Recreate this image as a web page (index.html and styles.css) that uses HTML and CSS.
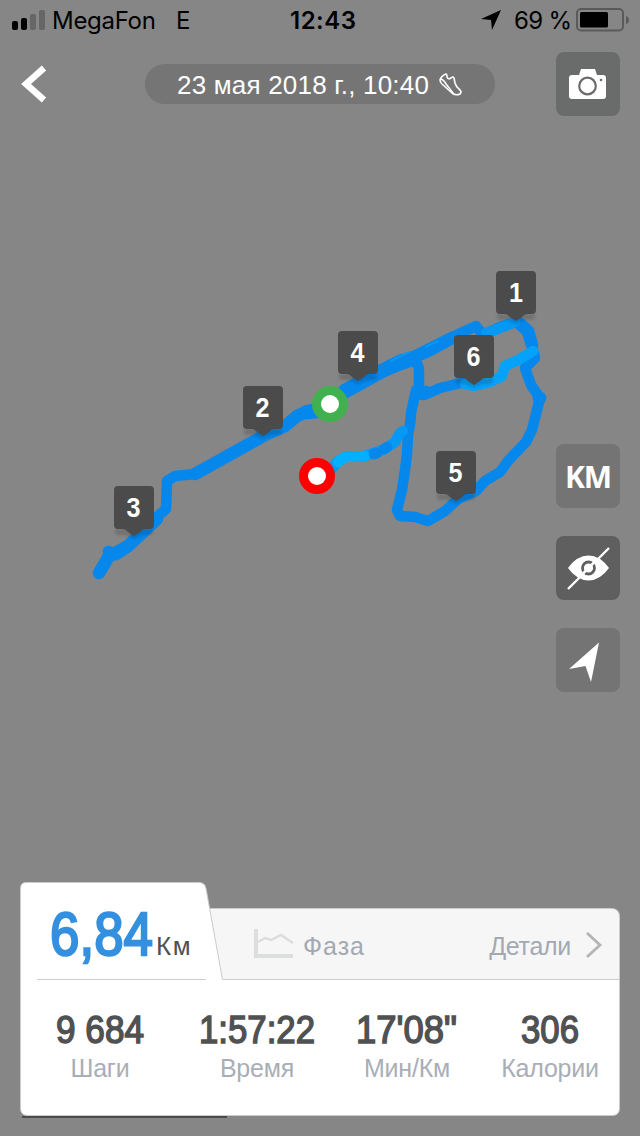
FILE: index.html
```html
<!DOCTYPE html>
<html lang="ru">
<head>
  <meta charset="UTF-8" />
  <meta name="viewport" content="width=device-width, initial-scale=1.0"/>
  <title>Тренировка</title>
  <link rel="stylesheet" href="styles.css">
</head>
<body>

  <!-- Карта маршрута -->
  <svg class="map" viewBox="0 0 640 1136">
    <defs>
      <g id="pin">
        <path class="pin-shadow" d="M1 43h38v3q0 3-4 3h-6l-9 4-9-4H5q-4 0-4-3z"/>
        <path class="pin-body" d="M4 0h32a4 4 0 0 1 4 4v35a4 4 0 0 1-4 4h-4c-3 0-4 1-6 3l-6 4-6-4c-2-2-3-3-6-3H4a4 4 0 0 1-4-4V4a4 4 0 0 1 4-4z"/>
      </g>
    </defs>
    <g class="route">
      <path d="M99 573l10-17M115 553l13-7 15-14 14-13"/>
      <path class="thin" d="M108 551l7 2M153 520l13-11 1-28 8-5 20-2"/>
      <path d="M109 555l7-1 12-8 15-14M195 474l45-25 25-14 20-9 12-10 9-4 12-2"/>
      <path class="wide" d="M307 412l10-1M345 391l13-7 22-12 22-11"/>
      <path d="M330 404l15-13 35-19 32-12"/>
      <path class="thin" d="M380 371l32-14 18-9 22-11 24-11 7 9 17-8 16-5 10 6 6 17 1 8"/>
      <path d="M412 358l18-8 22-12"/>
      <path d="M520 324l8 7 4 14M423 393l3-1M539 399l1-1"/>
      <path class="thin" d="M412 359q7 4 7 12v23l5 1 16-7 25-6"/>
      <path class="thin" d="M533 350l2 8-10 10 6 17 9 13-8 32-6 12-18 19-8 11-15 9-9 10-18 8-13 12-17 10-13-4-15-1-3-6 5-20 3-20 2-16 1-19 2-10 1-12 5-23"/>
      <path class="thin light" d="M486 333l14-5 15-6"/>
      <path class="thin lighter" d="M465 384l9 2 16-4 12-6 3-10 15-7 13-8"/>
      <path class="thin light" d="M331 470l6-8 8-5 20-1 20-7 10-7 5-9 3-2"/>
      <path class="thin cyan" d="M338 462l7-5 20-1"/>
      <path class="thin" d="M374 454l3-1M384 449l3-2"/>
      <path class="streak" d="M391 361l18-9M426 347l12-6"/>
    </g>

    <circle cx="330" cy="404" r="18" fill="#41b04f"/>
    <circle cx="330" cy="404" r="9" fill="#fff"/>
    <circle cx="317" cy="476" r="18" fill="#fe0000"/>
    <circle cx="317" cy="476" r="9" fill="#fff"/>

    <g class="pins">
      <g transform="translate(496 271)"><use href="#pin"/><text x="13" y="31" textLength="14" lengthAdjust="spacingAndGlyphs">1</text></g>
      <g transform="translate(243 386)"><use href="#pin"/><text x="12.500" y="31" textLength="14" lengthAdjust="spacingAndGlyphs">2</text></g>
      <g transform="translate(114 486)"><use href="#pin"/><text x="12.500" y="31" textLength="14" lengthAdjust="spacingAndGlyphs">3</text></g>
      <g transform="translate(338 331)"><use href="#pin"/><text x="12.500" y="31" textLength="14" lengthAdjust="spacingAndGlyphs">4</text></g>
      <g transform="translate(436 451)"><use href="#pin"/><text x="12.500" y="31" textLength="14" lengthAdjust="spacingAndGlyphs">5</text></g>
      <g transform="translate(454 335)"><use href="#pin"/><text x="12.500" y="31" textLength="14" lengthAdjust="spacingAndGlyphs">6</text></g>
    </g>
  </svg>

  <div class="status-bar">
    <svg class="signal" width="34" height="20" viewBox="0 0 34 20">
      <rect x="0" y="11" width="6" height="9" rx="2"/>
      <rect x="9" y="8" width="6" height="12" rx="2"/>
      <rect x="18" y="4" width="6" height="16" rx="2" fill="#666"/>
      <rect x="27" y="0" width="6" height="20" rx="2" fill="#666"/>
    </svg>
    <span class="carrier">MegaFon</span>
    <span class="network">E</span>
    <span class="clock">12:43</span>
    <svg class="location" width="20" height="20" viewBox="0 0 20 20"><path d="M20 0L11 20 10 10 0 9z"/></svg>
    <span class="percent">69 %</span>
    <svg class="battery" width="54" height="24" viewBox="0 0 54 24">
      <rect x="1" y="1" width="46" height="21.500" rx="4" fill="none" stroke="#5a5a5a" stroke-width="2"/>
      <rect x="4" y="4" width="28" height="15.500" rx="1.500"/>
      <path d="M50 8q3 1 3 4t-3 4z" fill="#5a5a5a"/>
    </svg>
  </div>

  <div class="header">
    <svg class="back" width="28" height="38" viewBox="0 0 28 38"><path d="M24 3L6 19l18 16" fill="none" stroke="#fff" stroke-width="6.500"/></svg>
    <div class="date">
      <span>23 мая 2018 г., 10:40</span>
      <svg width="24" height="24" viewBox="0 0 24 24" fill="none" stroke="#fff" stroke-width="1.600" stroke-linejoin="round" stroke-linecap="round">
        <path d="M8 2Q3 4 2 8q0 2 2 4l10 9q4 3 8 1 2-2 0-4-4-3-5-7l-1-5q-1-2-3 0-3 2-4-1 0-3-1-3z"/>
        <path d="M3 7q3 1 5 5l7 9"/>
      </svg>
    </div>
    <div class="tool camera">
      <svg width="38" height="31" viewBox="0 0 38 31">
        <path d="M10 6l2-6h14l2 6h6q3 0 3 3v18q0 3-3 3H3q-3 0-3-3V9q0-3 3-3z" fill="#fff"/>
        <circle cx="18.500" cy="17" r="8.300" fill="none" stroke="#6a6c6b" stroke-width="2.200"/>
        <circle cx="32" cy="11" r="1.300" fill="#6a6c6b"/>
      </svg>
    </div>
  </div>

  <div class="tools">
    <div class="tool">KM</div>
    <div class="tool active">
      <svg width="44" height="44" viewBox="0 0 44 44">
        <path d="M2 22Q11 9.500 22.500 9.500T43 22Q34 34.500 22.500 34.500T2 22z" fill="#fff"/>
        <circle cx="22.500" cy="22" r="6" fill="none" stroke="#5f5f5f" stroke-width="2.800"/>
        <path d="M17 27.500L28 16.500" stroke="#fff" stroke-width="2.500"/>
        <path d="M2 43L15 30M31 14L43 2" stroke="#fff" stroke-width="2.400"/>
      </svg>
    </div>
    <div class="tool">
      <svg width="44" height="44" viewBox="0 0 44 44"><path d="M33 4.500L25 44l-5.500-16L3 31z" fill="#fff"/></svg>
    </div>
  </div>

  <!-- Итоги тренировки -->
  <div class="panel">
    <svg class="panel-shape" width="600" height="234" viewBox="0 0 600 234">
      <path d="M188 26.500h403q8.500 0 8.500 8v63H188z" fill="#f6f6f6" stroke="#c9cbcc"/>
      <path d="M6 .5h173q6 0 7 6l16.500 91H599.500V226q0 7.500-7.500 7.500H8Q.5 233.500.5 226V6.500Q.5.5 6 .5z" fill="#fff" stroke="#c9cbcc"/>
    </svg>
    <div class="tabs">
      <div class="distance">
        <svg width="103" height="60"><text class="big" x="0" y="49" textLength="103" lengthAdjust="spacingAndGlyphs">6,84</text></svg>
        <span>Км</span>
      </div>
      <div class="phase">
        <svg width="42" height="29" viewBox="0 0 42 29" fill="none" stroke="#dcdddd">
          <path d="M2 0v27h37" stroke-width="4"/>
          <path d="M4 13l7-4 6 2 10-5 12 8" stroke-width="2.500"/>
        </svg>
        <span>Фаза</span>
      </div>
      <div class="details">
        <span>Детали</span>
        <svg width="18" height="28" viewBox="0 0 18 28"><path d="M2 2l13 12L2 26" fill="none" stroke="#b3b4b5" stroke-width="2.800"/></svg>
      </div>
    </div>
    <div class="stats">
      <div class="stat">
        <svg width="88" height="40"><text x="0" y="34" textLength="88" lengthAdjust="spacingAndGlyphs">9 684</text></svg>
        <span>Шаги</span>
      </div>
      <div class="stat">
        <svg width="116" height="40"><text x="0" y="34" textLength="116" lengthAdjust="spacingAndGlyphs">1:57:22</text></svg>
        <span>Время</span>
      </div>
      <div class="stat">
        <svg width="102" height="40"><text x="0" y="34" textLength="101" lengthAdjust="spacingAndGlyphs">17'08"</text></svg>
        <span>Мин/Км</span>
      </div>
      <div class="stat">
        <svg width="58" height="40"><text x="0" y="34" textLength="58" lengthAdjust="spacingAndGlyphs">306</text></svg>
        <span>Калории</span>
      </div>
    </div>
  </div>
  <div class="attribution"></div>

</body>
</html>
```
FILE: styles.css
```css
body {
  position: relative;
  width: 640px;
  height: 1136px;
  margin: 0;
  background-color: #868686;
  color: #fff;
  font-family: "Liberation Sans", Arial, sans-serif;
  display: flex;
  flex-direction: column;
  overflow: hidden;
}
svg {
  display: block;
  flex: none;
  overflow: visible;
}
span {
  white-space: nowrap;
}
.map {
  position: absolute;
  top: 0;
  left: 0;
  width: 640px;
  height: 1136px;
}
.route path {
  fill: none;
  stroke: #0587ec;
  stroke-width: 12.500;
  stroke-linecap: round;
  stroke-linejoin: round;
}
.route .wide {
  stroke-width: 14.500;
}
.route .thin {
  stroke-width: 10.500;
}
.route .light {
  stroke: #0598f4;
}
.route .lighter {
  stroke: #04a2f8;
}
.route .cyan {
  stroke: #02b0ff;
}
.route .streak {
  stroke: #0598f4;
  stroke-width: 2;
}
.pin-body {
  fill: #4b4b4b;
}
.pin-shadow {
  fill: #000;
  opacity: 0.15;
  filter: blur(1.500px);
}
.pins text {
  fill: #fff;
  font-size: 28px;
  font-weight: bold;
}

/* Barra de estado */
.status-bar {
  position: relative;
  height: 40px;
  display: flex;
  align-items: center;
  color: #000;
  font-family: Inter, sans-serif;
  font-size: 24px;
}
.signal {
  margin-left: 12px;
}
.carrier {
  width: 124px;
  margin-left: 6px;
  letter-spacing: -0.3px;
}
.network {
  width: 114px;
}
.clock {
  width: 191px;
  font-weight: 600;
  letter-spacing: 0.5px;
}
.percent {
  width: 62px;
  margin-left: 13px;
  letter-spacing: -0.7px;
}
.header {
  position: relative;
  height: 88px;
  padding: 0 20px;
  display: flex;
  align-items: center;
}
.date {
  width: 318px;
  height: 40px;
  margin-left: 97px;
  padding-left: 32px;
  border-radius: 20px;
  background-color: #757575;
  display: flex;
  align-items: center;
  gap: 9px;
  font-size: 26px;
  letter-spacing: 0.200px;
}
.date span {
  margin-top: 2px;
}
.tool {
  width: 64px;
  height: 64px;
  border-radius: 8px;
  background-color: #747474;
  display: flex;
  align-items: center;
  justify-content: center;
  font: bold 30px "Noto Sans", sans-serif;
  letter-spacing: -1.2px;
}
.camera {
  margin-left: auto;
  background-color: #6a6c6b;
}
.active {
  background-color: #5f5f5f;
}
.tools {
  position: relative;
  margin: 316px 20px 0 auto;
  display: flex;
  flex-direction: column;
  gap: 28px;
}
.panel {
  position: relative;
  width: 600px;
  height: 234px;
  margin: 190px 20px 0;
}
.panel-shape {
  position: absolute;
  top: 0;
  left: 0;
}
.tabs {
  position: relative;
  height: 98px;
  display: flex;
}
.distance {
  width: 169px;
  height: 97px;
  margin-left: 17px;
  border-bottom: 1px solid #cccdce;
  display: flex;
  align-items: flex-start;
  color: #505050;
}
.distance svg {
  margin: 24px 0 0 13px;
}
.distance span {
  margin: 50px 0 0 3px;
  font-size: 26px;
  line-height: 28px;
  letter-spacing: 1.500px;
}
.distance .big {
  fill: #3490df;
  stroke: #3490df;
  stroke-width: 2.400;
  font-size: 61px;
}
.phase,
.details {
  height: 71px;
  margin-top: 27px;
  display: flex;
  align-items: center;
  color: #a3a9b1;
  font-size: 25px;
}
.phase {
  margin-left: 48px;
  gap: 7px;
  letter-spacing: 1px;
}
.phase svg {
  margin-top: -3px;
}
.phase span,
.details span {
  margin-top: 4px;
}
.details {
  margin-left: auto;
  margin-right: 17px;
  gap: 14px;
  letter-spacing: -0.3px;
}
.stats {
  position: relative;
  height: 136px;
  padding-top: 29px;
  box-sizing: border-box;
  display: flex;
}
.stat {
  display: flex;
  flex-direction: column;
  align-items: center;
  width: 160px;
  color: #a9aeb6;
  font-size: 25px;
  letter-spacing: -0.2px;
}
.stat:nth-child(2) {
  width: 154px;
}
.stat:nth-child(3) {
  width: 146px;
}
.stat:nth-child(4) {
  width: 140px;
}
.stat text {
  fill: #505152;
  stroke: #505152;
  stroke-width: 1.500;
  font-size: 39px;
  letter-spacing: 0;
}
.stat span {
  margin-top: 4px;
  line-height: 30px;
}
.attribution {
  width: 205px;
  height: 2px;
  margin-left: 22px;
  background-color: #4b4b4b;
}
```
